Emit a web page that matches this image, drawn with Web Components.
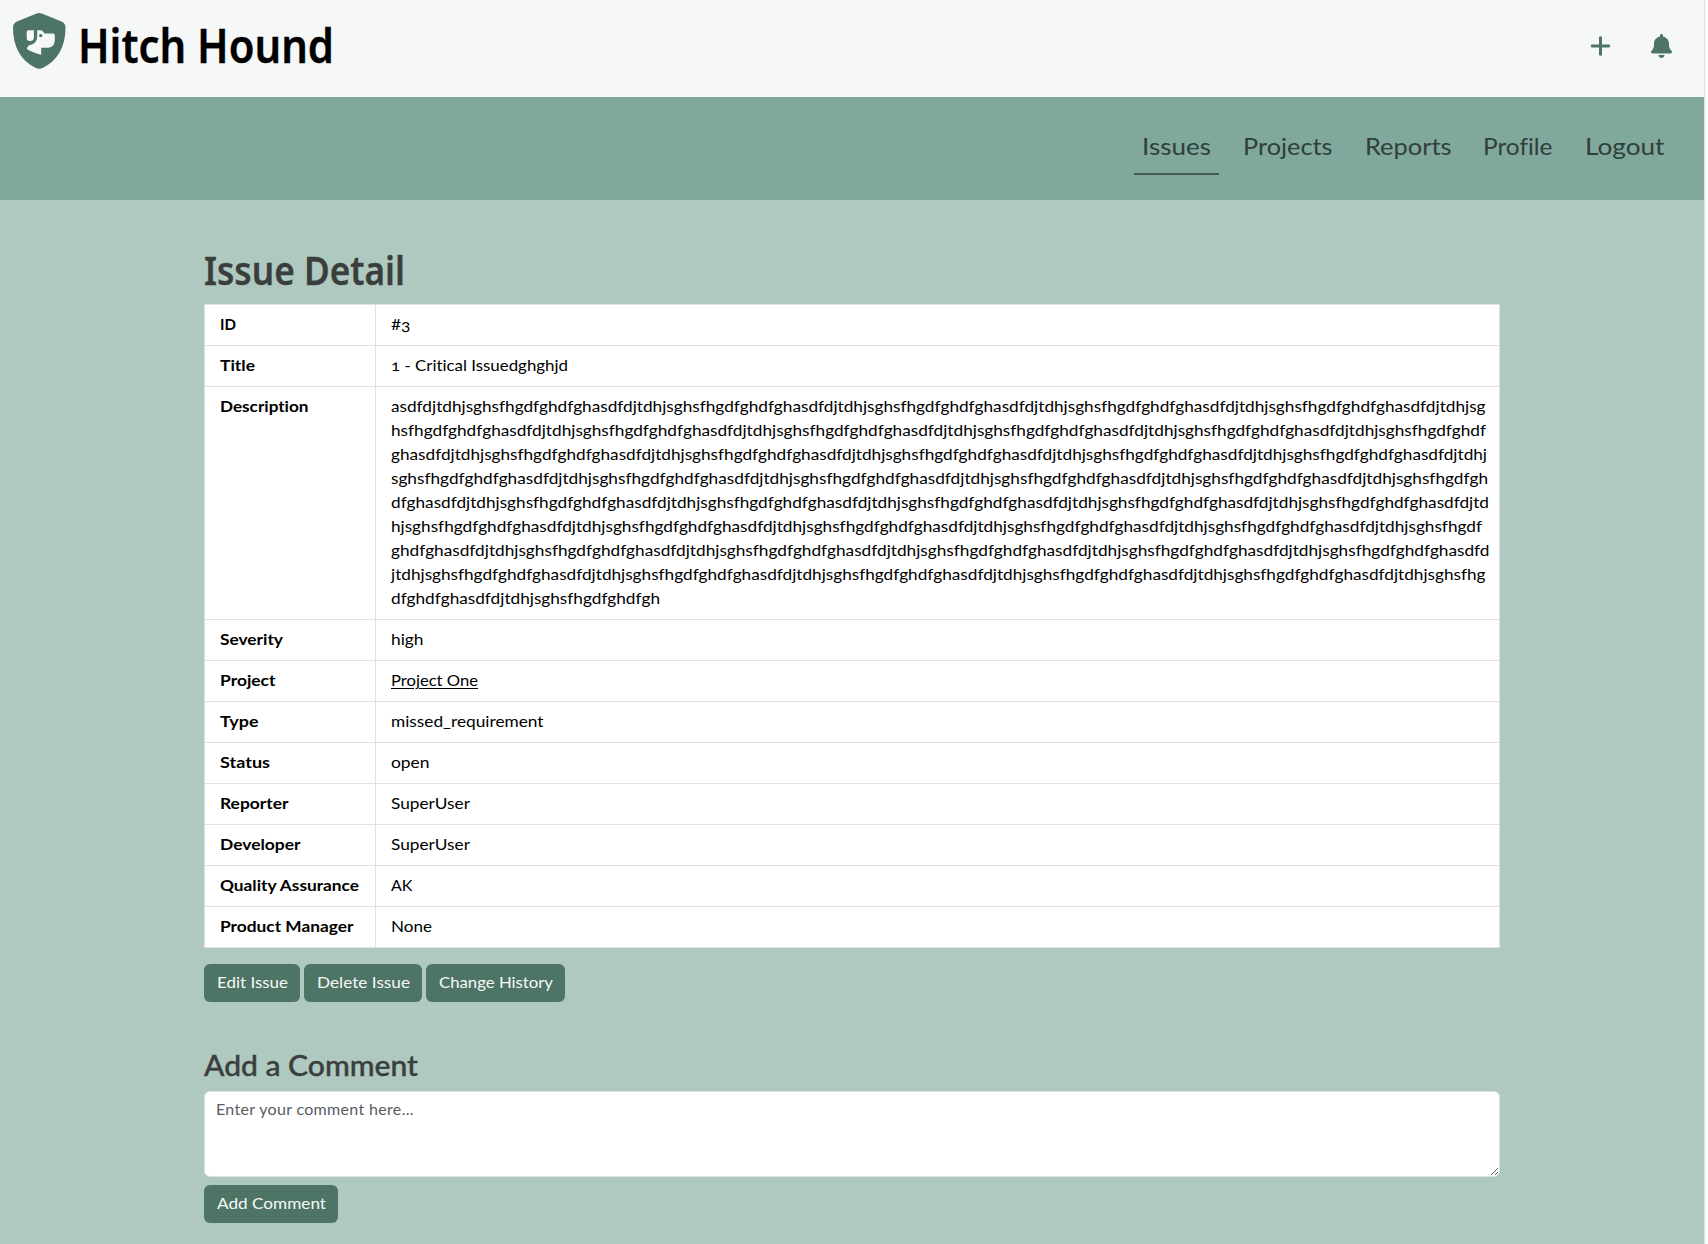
<!DOCTYPE html>
<html lang="en">
<head>
<meta charset="utf-8">
<title>Hitch Hound</title>
<style>
html,body{margin:0;height:100%}
body{overflow:hidden;font:400 16px/24px Lato,"Open Sans",sans-serif;font-variant-ligatures:none;color:#000;background:#fafafa}
</style>
</head>
<body>
<hh-app></hh-app>
<script>
const define = (name, html, setup) => customElements.define(name, class extends HTMLElement {
  connectedCallback() {
    if (this.shadowRoot) return;
    const t = document.createElement('template');
    t.innerHTML = html;
    this.attachShadow({mode: 'open'}).append(t.content.cloneNode(true));
    if (setup) setup(this, this.shadowRoot);
  }
});

// Stretches its text to the width given in the w attribute.
define('fit-text', `<style>:host{display:inline-block;white-space:pre;vertical-align:top}span{display:inline-block;transform-origin:0 0}:host([underlined]) span{text-decoration:underline 1px;text-underline-offset:2px}</style><span><slot></slot></span>`, (el, root) => {
  const w = +el.getAttribute('w'), s = root.querySelector('span');
  s.style.transform = `scaleX(${w / s.getBoundingClientRect().width})`;
  el.style.width = w + 'px';
});

define('hh-logo', `<style>:host{display:block;width:56px;height:60px}svg{display:block}</style>
<svg width="56" height="60" viewBox="11 11 56 60">
<path fill="#4d7465" d="M36.600 13.600Q39.200 12.500 41.800 13.600L61.500 21.500Q65.500 23.300 65.500 27.500C65.500 47 57.500 60.500 43 67.800Q39.200 69.900 35.400 67.800C21 60.500 13 47 13 27.500Q13 23.300 17 21.500Z"/>
<path fill="#f6f8f7" d="M28.500 30.300H33.900V37.300A3.500 3.500 0 0 1 30.400 41H30A3.300 3.300 0 0 1 26.700 37.500V32A1.700 1.700 0 0 1 28.500 30.300Z"/>
<path fill="#f6f8f7" d="M37.200 30.300H40.200C42.400 30.300 43.400 31.800 44.300 33.600H53.200Q54.800 33.600 54.800 35.200V39.500C54.800 44.300 52.500 47.700 48 47.700H41.200V54.800C37 53.800 31 51.800 27.300 49.600Q26.300 47.800 28.600 45.500C30.500 44.700 33 44.500 35 42.500Q37.200 40.200 37.200 36.500Z"/>
<circle cx="40.700" cy="35.600" r="1.700" fill="#4d7465"/>
</svg>`);

define('hh-icon', `<style>:host{display:block;width:21px;height:24px}svg{display:block;fill:#4d7465}</style><svg width="21" height="24" viewBox="0 0 448 512"><path/></svg>`, (el, root) => {
  root.querySelector('path').setAttribute('d', {
    plus: 'M256 80c0-17.700-14.300-32-32-32s-32 14.300-32 32V224H48c-17.700 0-32 14.300-32 32s14.300 32 32 32H192V432c0 17.700 14.300 32 32 32s32-14.300 32-32V288H400c17.700 0 32-14.300 32-32s-14.300-32-32-32H256V80z',
    bell: 'M224 0c-17.700 0-32 14.300-32 32V51.200C119 66 64 130.600 64 208v18.800c0 47-17.300 92.400-48.500 127.600l-7.400 8.300c-8.400 9.400-10.400 22.900-5.300 34.400S19.400 416 32 416H416c12.600 0 24-7.400 29.200-18.900s3.100-25-5.300-34.400l-7.400-8.300C401.300 319.200 384 273.900 384 226.800V208c0-77.400-55-142-128-156.800V32c0-17.700-14.300-32-32-32zm45.300 493.300c12-12 18.700-28.300 18.700-45.300H224 160c0 17 6.700 33.300 18.700 45.300s28.300 18.700 45.300 18.700s33.300-6.700 45.300-18.700z'
  }[el.getAttribute('name')]);
});

define('hh-header', `<style>
:host{display:flex;justify-content:space-between;align-items:flex-start;height:97px;background:#f6f8f7;box-sizing:border-box;padding:11px 32px 0 11px}
.brand{display:flex;gap:11px}
h1{margin:4.500px 0 0;font:600 47px/58px "Noto Sans",sans-serif;-webkit-text-stroke:.4px}
.tools{display:flex;gap:40px;margin-top:23px}
</style>
<div class="brand"><hh-logo></hh-logo><h1><fit-text w="256">Hitch Hound</fit-text></h1></div>
<div class="tools"><hh-icon name="plus"></hh-icon><hh-icon name="bell"></hh-icon></div>`);

define('hh-nav', `<style>
:host{display:flex;justify-content:flex-end;align-items:flex-start;gap:16px;height:103px;box-sizing:border-box;padding:24px 32px 0;background:#81a89c;color:#2f403a;font-size:24px;line-height:36px}
a{padding:7px 8px 9px;border-bottom:2px solid transparent}
a.on{border-color:#435c53}
</style>
<a class="on"><fit-text w="69">Issues</fit-text></a><a><fit-text w="89.500">Projects</fit-text></a><a><fit-text w="86.500">Reports</fit-text></a><a><fit-text w="69.500">Profile</fit-text></a><a><fit-text w="79.500">Logout</fit-text></a>`);

define('hh-row', `<style>
:host{display:grid;grid-template-columns:170px 1fr;column-gap:1px;background:#dee2e6}
div{background:#fff;padding:7px 0 9px 15px}
</style><div class="k"><slot name="label"></slot></div><div class="v"><slot></slot></div>`);

define('hh-table', `<style>
:host{display:grid;gap:1px;padding:1px;background:#dee2e6}
[slot=label]{font-weight:700}
.l{display:block}
.old{font-variant-numeric:oldstyle-nums}
</style>`, (el, root) => {
  const unit = 'asdfdjtdhjsghsfhgdfghdfgh'.repeat(45);
  const lines = [[137,1094.500],[136,1095],[137,1096],[136,1097],[137,1098],[136,1091],[136,1098.500],[137,1094.500],[33,269]];
  let at = 0;
  const desc = lines.map(([n, w]) => `<fit-text class="l" w="${w}">${unit.slice(at, at += n)}</fit-text>`).join('');
  const rows = [['ID',16,'#<span class="old">3</span>',19.500],['Title',35,'<span class="old">1</span> - Critical Issuedghghjd',177],['Description',88.500,desc],['Severity',63,'high',32.500],['Project',55.500,'Project One',87],['Type',38.500,'missed_requirement',152.500],['Status',50,'open',38.500],['Reporter',68.500,'SuperUser',79],['Developer',80.500,'SuperUser',79],['Quality Assurance',139,'AK',21.500],['Product Manager',133.500,'None',41]];
  const t = document.createElement('template');
  t.innerHTML = rows.map(([k, kw, v, w]) => `<hh-row><fit-text slot="label" w="${kw}">${k}</fit-text>${w ? `<fit-text ${k === 'Project' ? 'underlined' : ''} w="${w}">${v}</fit-text>` : v}</hh-row>`).join('');
  root.append(t.content);
});

define('hh-button', `<style>:host{display:block;background:#4d7465;color:#f6f8f7;border-radius:6px;padding:6px 12.500px 8px}</style><slot></slot>`);

define('hh-comment', `<style>
:host{display:block}
textarea{display:block;width:100%;height:86px;box-sizing:border-box;margin:0;border:1px solid #dee2e6;border-radius:6px;padding:5px 11px;font:inherit;letter-spacing:.33px;resize:vertical;background:#fff;outline:0}
textarea::placeholder{color:#595c5f;opacity:1}
</style><textarea placeholder="Enter your comment here..."></textarea>`);

define('hh-app', `<style>
:host{display:block;width:1704px;height:1244px;background:#b0c9c0;border-right:1px solid #e2e2e4}
main{width:1296px;margin:0 auto;padding-top:46px}
h2{margin:0 0 10px;color:#3a3f3d;font:600 39.500px/48px "Noto Sans",sans-serif;-webkit-text-stroke:.3px}
h3{margin:46px 0 9px;color:#3a3f3d;font-weight:500;font-size:28px;line-height:34px;-webkit-text-stroke:.4px}
.btns{display:flex;gap:4px;margin-top:16px}
.btns.add{margin-top:8px}
</style>
<hh-header></hh-header><hh-nav></hh-nav>
<main>
<h2><fit-text w="201">Issue Detail</fit-text></h2>
<hh-table></hh-table>
<div class="btns"><hh-button><fit-text w="71">Edit Issue</fit-text></hh-button><hh-button><fit-text w="93">Delete Issue</fit-text></hh-button><hh-button><fit-text w="114">Change History</fit-text></hh-button></div>
<h3><fit-text w="214">Add a Comment</fit-text></h3>
<hh-comment></hh-comment>
<div class="btns add"><hh-button><fit-text w="109">Add Comment</fit-text></hh-button></div>
</main>`);
</script>
</body>
</html>
